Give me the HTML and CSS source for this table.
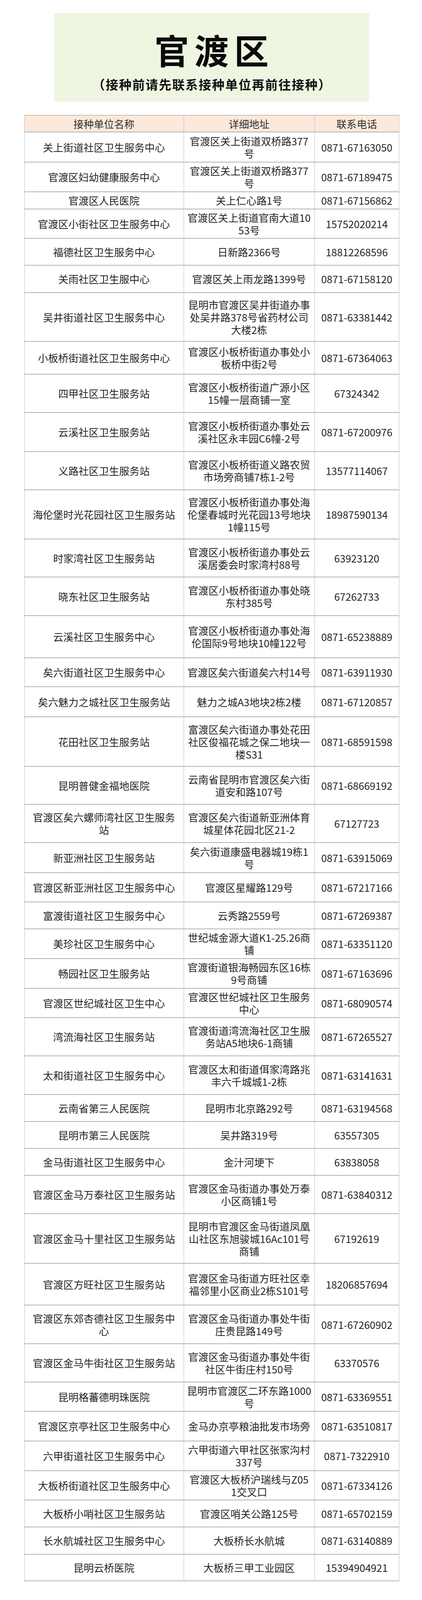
FILE: index.html
```html
<!DOCTYPE html>
<html lang="zh-CN">
<head>
<meta charset="utf-8">
<title>官渡区</title>
<link rel="stylesheet" href="styles.css">
</head>
<body>
<div class="page">
  <section class="banner">
    <h1 class="title">官渡区</h1>
    <p class="subtitle">（接种前请先联系接种单位再前往接种）</p>
  </section>

  <table class="list">
    <colgroup>
      <col class="c-name"><col class="c-addr"><col class="c-tel">
    </colgroup>
    <thead>
      <tr class="head"><th>接种单位名称</th><th>详细地址</th><th>联系电话</th></tr>
    </thead>
    <tbody>
      <tr class="s77"><td>关上街道社区卫生服务中心</td><td>官渡区关上街道双桥路377<br>号</td><td>0871-67163050</td></tr>
      <tr class="s76"><td>官渡区妇幼健康服务中心</td><td>官渡区关上街道双桥路377<br>号</td><td>0871-67189475</td></tr>
      <tr class="s44"><td>官渡区人民医院</td><td>关上仁心路1号</td><td>0871-67156862</td></tr>
      <tr class="s75"><td>官渡区小街社区卫生服务中心</td><td>官渡区关上街道官南大道10<br>53号</td><td>15752020214</td></tr>
      <tr class="s69"><td>福德社区卫生服务中心</td><td>日新路2366号</td><td>18812268596</td></tr>
      <tr class="s70"><td>关雨社区卫生服中心</td><td>官渡区关上雨龙路1399号</td><td>0871-67158120</td></tr>
      <tr class="s125"><td>吴井街道社区卫生服务中心</td><td>昆明市官渡区吴井街道办事<br>处吴井路378号省药材公司<br>大楼2栋</td><td>0871-63381442</td></tr>
      <tr class="s84"><td>小板桥街道社区卫生服务中心</td><td>官渡区小板桥街道办事处小<br>板桥中街2号</td><td>0871-67364063</td></tr>
      <tr class="s98"><td>四甲社区卫生服务站</td><td>官渡区小板桥街道广源小区<br>15幢一层商铺一室</td><td>67324342</td></tr>
      <tr class="s100"><td>云溪社区卫生服务站</td><td>官渡区小板桥街道办事处云<br>溪社区永丰园C6幢-2号</td><td>0871-67200976</td></tr>
      <tr class="s98"><td>义路社区卫生服务站</td><td>官渡区小板桥街道义路农贸<br>市场旁商铺7栋1-2号</td><td>13577114067</td></tr>
      <tr class="s126"><td>海伦堡时光花园社区卫生服务站</td><td>官渡区小板桥街道办事处海<br>伦堡春城时光花园13号地块<br>1幢115号</td><td>18987590134</td></tr>
      <tr class="s97"><td>时家湾社区卫生服务站</td><td>官渡区小板桥街道办事处云<br>溪居委会时家湾村88号</td><td>63923120</td></tr>
      <tr class="s99"><td>晓东社区卫生服务站</td><td>官渡区小板桥街道办事处晓<br>东村385号</td><td>67262733</td></tr>
      <tr class="s108"><td>云溪社区卫生服务中心</td><td>官渡区小板桥街道办事处海<br>伦国际9号地块10幢122号</td><td>0871-65238889</td></tr>
      <tr class="s74"><td>矣六街道社区卫生服务中心</td><td>官渡区矣六街道矣六村14号</td><td>0871-63911930</td></tr>
      <tr class="s77"><td>矣六魅力之城社区卫生服务站</td><td>魅力之城A3地块2栋2楼</td><td>0871-67120857</td></tr>
      <tr class="s127"><td>花田社区卫生服务站</td><td>富渡区矣六街道办事处花田<br>社区俊福花城之保二地块一<br>楼S31</td><td>0871-68591598</td></tr>
      <tr class="s97"><td>昆明普健金福地医院</td><td>云南省昆明市官渡区矣六街<br>道安和路107号</td><td>0871-68669192</td></tr>
      <tr class="s98"><td>官渡区矣六螺师湾社区卫生服务<br>站</td><td>官渡区矣六街道新亚洲体育<br>城星体花园北区21-2</td><td>67127723</td></tr>
      <tr class="s77"><td>新亚洲社区卫生服务站</td><td>矣六街道康盛电器城19栋1<br>号</td><td>0871-63915069</td></tr>
      <tr class="s75"><td>官渡区新亚洲社区卫生服务中心</td><td>官渡区星耀路129号</td><td>0871-67217166</td></tr>
      <tr class="s69"><td>富渡街道社区卫生服务中心</td><td>云秀路2559号</td><td>0871-67269387</td></tr>
      <tr class="s76"><td>美珍社区卫生服务中心</td><td>世纪城金源大道K1-25.26商<br>铺</td><td>0871-63351120</td></tr>
      <tr class="s76"><td>畅园社区卫生服务站</td><td>官渡街道银海畅园东区16栋<br>9号商铺</td><td>0871-67163696</td></tr>
      <tr class="s75"><td>官渡区世纪城社区卫生中心</td><td>官渡区世纪城社区卫生服务<br>中心</td><td>0871-68090574</td></tr>
      <tr class="s98"><td>湾流海社区卫生服务站</td><td>官渡街道湾流海社区卫生服<br>务站A5地块6-1商铺</td><td>0871-67265527</td></tr>
      <tr class="s99"><td>太和街道社区卫生服务中心</td><td>官渡区太和街道佴家湾路兆<br>丰六千城城1-2栋</td><td>0871-63141631</td></tr>
      <tr class="s69"><td>云南省第三人民医院</td><td>昆明市北京路292号</td><td>0871-63194568</td></tr>
      <tr class="s69"><td>昆明市第三人民医院</td><td>吴井路319号</td><td>63557305</td></tr>
      <tr class="s69"><td>金马街道社区卫生服务中心</td><td>金汁河埂下</td><td>63838058</td></tr>
      <tr class="s98"><td>官渡区金马万泰社区卫生服务站</td><td>官渡区金马街道办事处万泰<br>小区商铺1号</td><td>0871-63840312</td></tr>
      <tr class="s127"><td>官渡区金马十里社区卫生服务站</td><td>昆明市官渡区金马街道凤凰<br>山社区东旭骏城16Ac101号<br>商铺</td><td>67192619</td></tr>
      <tr class="s107"><td>官渡区方旺社区卫生服务站</td><td>官渡区金马街道方旺社区幸<br>福邻里小区商业2栋S101号</td><td>18206857694</td></tr>
      <tr class="s99"><td>官渡区东郊杏德社区卫生服务中<br>心</td><td>官渡区金马街道办事处牛街<br>庄贵昆路149号</td><td>0871-67260902</td></tr>
      <tr class="s98"><td>官渡区金马牛街社区卫生服务站</td><td>官渡区金马街道办事处牛街<br>社区牛街庄村150号</td><td>63370576</td></tr>
      <tr class="s75"><td>昆明格蕃德明珠医院</td><td>昆明市官渡区二环东路1000<br>号</td><td>0871-63369551</td></tr>
      <tr class="s76"><td>官渡区京亭社区卫生服务中心</td><td>金马办京亭粮油批发市场旁</td><td>0871-63510817</td></tr>
      <tr class="s76"><td>六甲街道社区卫生服务中心</td><td>六甲街道六甲社区张家沟村<br>337号</td><td>0871-7322910</td></tr>
      <tr class="s75"><td>大板桥街道社区卫生服务中心</td><td>官渡区大板桥沪瑞线与Z05<br>1交叉口</td><td>0871-67334126</td></tr>
      <tr class="s69"><td>大板桥小哨社区卫生服务站</td><td>官渡区哨关公路125号</td><td>0871-65702159</td></tr>
      <tr class="s70"><td>长水航城社区卫生服务中心</td><td>大板桥长水航城</td><td>0871-63140889</td></tr>
      <tr class="s68"><td>昆明云桥医院</td><td>大板桥三甲工业园区</td><td>15394904921</td></tr>
    </tbody>
  </table>
</div>
</body>
</html>
```

FILE: styles.css
```css
html, body {
  margin: 0;
  padding: 0;
  background: #ffffff;
}

body {
  font-family: "Noto Sans CJK SC", "Noto Sans", sans-serif;
  color: #262626;
}

.page {
  width: 1080px;
  padding-top: 34px;
  padding-bottom: 20px;
  display: flex;
  flex-direction: column;
  align-items: center;
}

.banner {
  width: 807px;
  height: 226px;
  margin-left: 3px;
  background: #eef6e2;
  display: flex;
  flex-direction: column;
  align-items: center;
  box-sizing: border-box;
  padding-top: 28px;
}

.title {
  margin: 0 0 0 14px;
  font-size: 88px;
  line-height: 128px;
  font-weight: 700;
  color: #0a0a0a;
  letter-spacing: 14px;
}

.subtitle {
  margin: 2px 0 0 2px;
  font-size: 32px;
  line-height: 47px;
  font-weight: 700;
  color: #111111;
  letter-spacing: 2px;
}

.list {
  margin-top: 34px;
  width: 959px;
  margin-left: 3px;
  border-collapse: collapse;
  table-layout: fixed;
  font-size: 26px;
}

.c-name { width: 408px; }
.c-addr { width: 335px; }
.c-tel { width: 216px; }

.list th,
.list td {
  box-sizing: border-box;
  border-left: 1px solid #bdbdbd;
  border-right: 1px solid #bdbdbd;
  border-bottom: 2px solid #b3b3b3;
  text-align: center;
  vertical-align: middle;
  padding: 0;
  line-height: 32px;
  white-space: nowrap;
}

.head th {
  height: 43px;
  background: #fbe9dc;
  font-weight: 400;
  color: #2e2e2e;
  border-top: 2px solid #c8bfb5;
}

.list td {
  color: #262626;
}

.s44 td { height: 44px; }
.s68 td { height: 68px; }
.s69 td { height: 69px; }
.s70 td { height: 70px; }
.s74 td { height: 74px; }
.s75 td { height: 75px; }
.s76 td { height: 76px; }
.s77 td { height: 77px; }
.s84 td { height: 84px; }
.s97 td { height: 97px; }
.s98 td { height: 98px; }
.s99 td { height: 99px; }
.s100 td { height: 100px; }
.s107 td { height: 107px; }
.s108 td { height: 108px; }
.s125 td { height: 125px; }
.s126 td { height: 126px; }
.s127 td { height: 127px; }
```
